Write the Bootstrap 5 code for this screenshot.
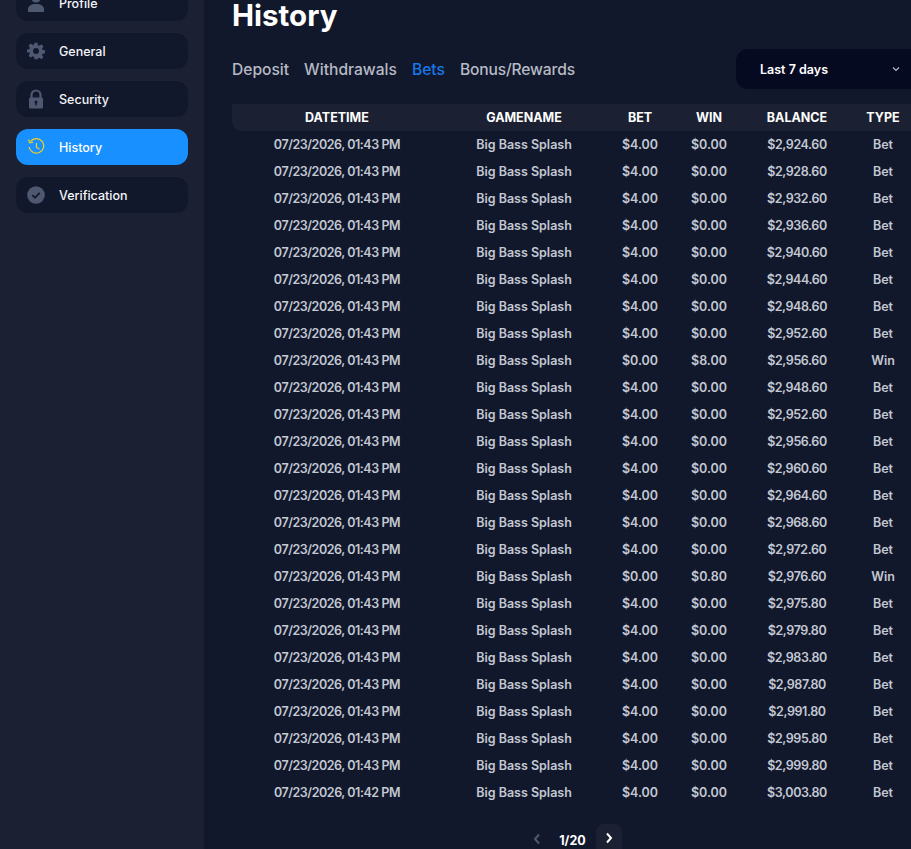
<!DOCTYPE html>
<html lang="en">
<head>
  <meta charset="UTF-8" />
  <title>History</title>
  <link href="https://cdn.jsdelivr.net/npm/bootstrap@5.3.0/dist/css/bootstrap.min.css" rel="stylesheet" />
  <style>
    html, body { height: 849px; overflow: hidden; }
    body { font-family: "Inter", "Noto Sans", sans-serif; background: #12182c; color: #fff; }
    .page-wrap { height: 849px; overflow: hidden; }
    .side-panel { width: 204px; flex: none; background: #1b2132; padding: 0 16px; margin-top: -15px; height: 864px; gap: 12px; }
    .side-item { height: 36px; border-radius: 12px; background: #12182c; color: #f2f4f8; font-size: 12.5px; font-weight: 500; text-decoration: none; padding: 2px 0 0 11px; gap: 14px; }
    .side-item.on { background: #1890ff; color: #fff; }
    .side-item svg { width: 18px; height: 20px; flex: none; margin-top: -2px; }
    .main-panel { flex: 1 1 auto; min-width: 0; padding-left: 28px; }
    .page-title { font-size: 29.5px; font-weight: 700; line-height: 30px; margin: 0; height: 49px; }
    .filter-row { width: 684px; height: 40px; margin-bottom: 15px; }
    .tab-links { gap: 15px; font-size: 15.6px; font-weight: 500; color: #b6bac4; padding-top: 1px; }
    .tab-links a { color: inherit; text-decoration: none; }
    .tab-links a.on { color: #1677e8; }
    .tab-links a.tight-tab { letter-spacing: -0.15px; }
    .range-pick { width: 180px; height: 40px; margin-left: auto; background: #060a20; border-radius: 12px 0 0 12px; padding: 2px 0 0 24px; font-size: 12.5px; font-weight: 600; flex: none; }
    .range-pick svg { position: absolute; left: 156px; top: 17px; }
    .hist-table { width: 684px; table-layout: fixed; border-collapse: collapse; text-align: center; font-size: 12.5px; }
    .hist-table th { height: 27px; padding: 2px 0 0; background: #1b2132; color: #fff; font-weight: 700; }
    .hist-table th:first-child { border-radius: 0 0 0 10px; }
    .hist-table td { height: 27px; padding: 2px 0 0; color: #c3c8d3; font-weight: 600; white-space: nowrap; }
    .hist-table .tight-date { letter-spacing: -0.45px; }
    .hist-table .tight-bal { letter-spacing: -0.4px; }
    .pager { width: 684px; height: 25px; margin-top: 18px; font-size: 12.5px; font-weight: 700; }
    .pager-btn { width: 26px; height: 32px; border-radius: 8px; background: #1b2132; margin-left: 2px; }
    .pager-prev { width: 26px; height: 30px; margin-left: -2px; margin-right: 1px; }
    .pager-num { line-height: 31px; padding: 1px 8px 0; }
  </style>
</head>
<body>
<div class="page-wrap d-flex">
  <nav class="side-panel d-flex flex-column">
    <a class="side-item d-flex align-items-center" href="#">
      <svg viewBox="0 0 17 20"><circle cx="8.5" cy="5" r="4.6" fill="#4e5870"/><path d="M0.5 19v-2.5C0.5 13 3.5 11 8.5 11s8 2 8 5.500V19z" fill="#4e5870"/></svg>Profile
    </a>
    <a class="side-item d-flex align-items-center" href="#">
      <svg viewBox="0 0 24 24"><path fill="#4e5870" fill-rule="evenodd" d="M10 1h4l.6 3.200 1.900.8 2.700-1.900 2.800 2.800-1.900 2.700.8 1.900 3.100.5v4l-3.100.6-.8 1.900 1.800 2.600-2.800 2.800-2.600-1.800-1.900.8L14 23h-4l-.6-3.100-1.900-.8-2.600 1.800-2.800-2.800 1.800-2.600-.8-1.900L0 14v-4l3.100-.5.8-1.900L2 4.900l2.800-2.800 2.700 1.900 1.900-.8zM12 8a4 4 0 1 0 0 8 4 4 0 0 0 0-8z"/></svg>General
    </a>
    <a class="side-item d-flex align-items-center" href="#">
      <svg viewBox="0 0 17 20"><path fill="none" stroke="#4e5870" stroke-width="2.200" d="M4 9V6a4.500 4.500 0 0 1 9 0v3"/><rect x="1.500" y="8.500" width="14" height="11" rx="1.500" fill="#4e5870"/><circle cx="8.500" cy="13" r="1.500" fill="#12182c"/><rect x="7.800" y="13" width="1.400" height="3.500" fill="#12182c"/></svg>Security
    </a>
    <a class="side-item on d-flex align-items-center" href="#">
      <svg viewBox="0 0 18 20" fill="none" stroke="#f0cf22" stroke-width="1.200"><path d="M3.600 4.400A7.300 7.300 0 1 1 2.200 10"/><path d="M1.500 2.600l1.300 3.200 3.200-.6"/><path d="M9.500 6v4.500l3 1.500"/></svg>History
    </a>
    <a class="side-item d-flex align-items-center" href="#">
      <svg viewBox="0 0 18 18"><circle cx="9" cy="9" r="8.800" fill="#4e5870"/><path d="M5.300 9.200l2.600 2.600 4.800-5" fill="none" stroke="#12182c" stroke-width="1.800"/></svg>Verification
    </a>
  </nav>

  <main class="main-panel">
    <h1 class="page-title">History</h1>
    <div class="filter-row d-flex align-items-center">
      <div class="tab-links d-flex">
        <a href="#">Deposit</a>
        <a href="#">Withdrawals</a>
        <a class="on" href="#">Bets</a>
        <a class="tight-tab" href="#">Bonus/Rewards</a>
      </div>
      <div class="range-pick position-relative d-flex align-items-center">
        Last 7 days
        <svg width="8" height="6" viewBox="0 0 8 6"><path d="M1 1.500l3 3 3-3" fill="none" stroke="#b6bac4" stroke-width="1.200"/></svg>
      </div>
    </div>

    <table class="hist-table">
      <colgroup>
        <col style="width:210px"><col style="width:164px"><col style="width:68px"><col style="width:70px"><col style="width:106px"><col style="width:66px">
      </colgroup>
      <thead>
        <tr><th>DATETIME</th><th>GAMENAME</th><th>BET</th><th>WIN</th><th>BALANCE</th><th>TYPE</th></tr>
      </thead>
      <tbody id="bet-rows"></tbody>
    </table>

    <div class="pager d-flex justify-content-center align-items-start">
      <span class="pager-prev d-flex align-items-center justify-content-center">
        <svg width="8" height="12" viewBox="0 0 8 12"><path d="M6 1.500L2 6l4 4.500" fill="none" stroke="#4e5870" stroke-width="2"/></svg>
      </span>
      <span class="pager-num">1/20</span>
      <span class="pager-btn d-flex align-items-start justify-content-center">
        <svg class="mt-2" width="8" height="12" viewBox="0 0 8 12"><path d="M2 1.500L6 6l-4 4.500" fill="none" stroke="#fff" stroke-width="2"/></svg>
      </span>
    </div>
  </main>
</div>

<script src="https://cdn.jsdelivr.net/npm/bootstrap@5.3.0/dist/js/bootstrap.bundle.min.js"></script>
<script>
  const bets = [
    ["$4.00","$0.00","$2,924.60","Bet"],["$4.00","$0.00","$2,928.60","Bet"],["$4.00","$0.00","$2,932.60","Bet"],
    ["$4.00","$0.00","$2,936.60","Bet"],["$4.00","$0.00","$2,940.60","Bet"],["$4.00","$0.00","$2,944.60","Bet"],
    ["$4.00","$0.00","$2,948.60","Bet"],["$4.00","$0.00","$2,952.60","Bet"],["$0.00","$8.00","$2,956.60","Win"],
    ["$4.00","$0.00","$2,948.60","Bet"],["$4.00","$0.00","$2,952.60","Bet"],["$4.00","$0.00","$2,956.60","Bet"],
    ["$4.00","$0.00","$2,960.60","Bet"],["$4.00","$0.00","$2,964.60","Bet"],["$4.00","$0.00","$2,968.60","Bet"],
    ["$4.00","$0.00","$2,972.60","Bet"],["$0.00","$0.80","$2,976.60","Win"],["$4.00","$0.00","$2,975.80","Bet"],
    ["$4.00","$0.00","$2,979.80","Bet"],["$4.00","$0.00","$2,983.80","Bet"],["$4.00","$0.00","$2,987.80","Bet"],
    ["$4.00","$0.00","$2,991.80","Bet"],["$4.00","$0.00","$2,995.80","Bet"],["$4.00","$0.00","$2,999.80","Bet"],
    ["$4.00","$0.00","$3,003.80","Bet"]
  ];

  document.getElementById("bet-rows").innerHTML = bets.map((b, i) => `
    <tr>
      <td class="tight-date">07/23/2026, ${i === bets.length - 1 ? "01:42" : "01:43"} PM</td>
      <td>Big Bass Splash</td>
      <td>${b[0]}</td><td>${b[1]}</td><td class="tight-bal">${b[2]}</td><td>${b[3]}</td>
    </tr>`).join("");
</script>
</body>
</html>
